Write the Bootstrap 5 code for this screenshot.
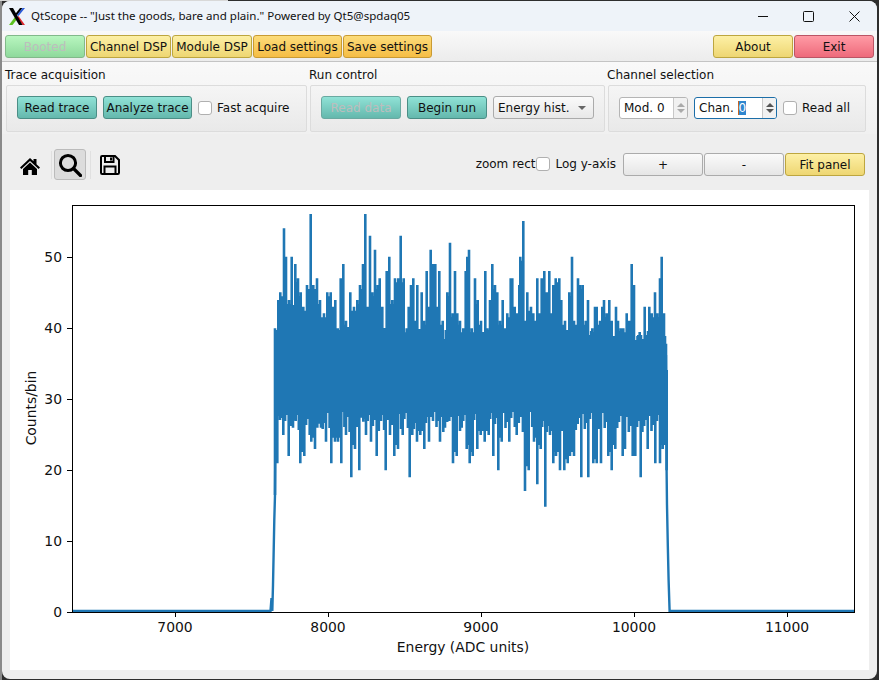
<!DOCTYPE html>
<html lang="en">
<head>
<meta charset="utf-8">
<title>QtScope</title>
<link rel="stylesheet" href="https://cdn.jsdelivr.net/npm/bootstrap@5.3.0/dist/css/bootstrap.min.css">
<style>
html, body { height: 680px; overflow: hidden; }
body { background: linear-gradient(#d8d8d8, #d8d8d8) 0 0 / 228px 1px no-repeat, linear-gradient(90deg, #8a8a8a 2px, #2e2e2e 2px); font-family: "DejaVu Sans", sans-serif; font-size: 12px; color: #111; }
.qt-window { margin: 1px 2px 1px 2px; height: 678px; background: #eee; border-radius: 8px; overflow: hidden; }
.qt-title { height: 30px; background: #eef3f9; padding-left: 7px; font-family: "Noto Sans", sans-serif; font-size: 11.55px; }
.qt-title .logo { width: 16px; height: 17px; margin-right: 6px; }
.win-ctl { width: 45.5px; height: 30px; }
.qt-top { height: 31px; padding: 4px 3px 3px 3px; gap: 1px; background: linear-gradient(#f9f9f9, #ececec); border-bottom: 1px solid #c4c4c4; }
.qt-btn { font-size: 12px; line-height: 21px; height: 23px; padding: 1px 0 0 0; border-radius: 3px; color: #111; white-space: nowrap; --bs-btn-font-size: 12px; }
.qt-btn:disabled { opacity: 1; color: #bdbdbd; }
.w80 { width: 80px; }
.w85 { width: 85px; }
.w89 { width: 89px; }
.c-green { background: linear-gradient(#b8f6bf, #8fd99c); border: 1px solid #82b98a; }
.c-green:disabled { background: linear-gradient(#b8f6bf, #8fd99c); border-color: #82b98a; }
.c-yellow { background: linear-gradient(#fdf0a6, #eed672); border: 1px solid #bda63f; }
.c-orange { background: linear-gradient(#fddc7a, #f5bd45); border: 1px solid #c99b33; }
.c-red { background: linear-gradient(#ff9ba5, #ee6a7b); border: 1px solid #bb5565; }
.c-teal { background: linear-gradient(#90e2d6, #64b8ad); border: 1px solid #4b8e86; }
.c-teal:disabled { background: linear-gradient(#90e2d6, #64b8ad); border-color: #6aa9a1; }
.c-grey { background: linear-gradient(#fafafa, #e6e6e6); border: 1px solid #ababab; }
.qt-btn:hover, .qt-btn:active { color: #111; }
.qt-controls { height: 72px; padding-left: 4px; gap: 3px; background: linear-gradient(#f9f9f9, #f0f0f0); }
.grp-head { height: 23px; line-height: 27px; margin-left: -1px; white-space: nowrap; }
.grp-box { height: 47px; padding: 10px 0 0 10px; gap: 6px; background: linear-gradient(#f5f5f5, #e9e9e9); border: 1px solid #dcdcdc; border-radius: 2px; }
.w301 { width: 301px; }
.w295 { width: 295px; }
.w258 { width: 258px; }
.qt-check { width: 14px; height: 14px; margin: 0; border: 1px solid #b0b0b0; border-radius: 2px; flex: none; background-color: #fff; }
.qt-label { margin: 0 0 0 5px; white-space: nowrap; }
.qt-combo { width: 101px; height: 23px; padding: 0 0 0 4px; color: #111; background: linear-gradient(#fafafa, #e8e8e8); border: 1px solid #ababab; border-radius: 3px; }
.qt-caret { width: 0; height: 0; border-left: 4px solid transparent; border-right: 4px solid transparent; border-top: 4px solid #666; margin-right: 7px; }
.qt-spin { height: 22px; background: #fff; border: 1px solid #b5b5b5; border-radius: 3px; overflow: hidden; line-height: 20px; margin-top: 1px; }
.qt-spin.focused { border-color: #1c6ea8; }
.w69 { width: 69px; }
.w83 { width: 83px; }
.spin-text { padding-left: 4px; white-space: nowrap; }
.spin-arrows { width: 14px; border-left: 1px solid #c8c8c8; background: #f1f1f1; gap: 2px; }
.tri-up, .tri-dn { width: 0; height: 0; border-left: 4px solid transparent; border-right: 4px solid transparent; }
.tri-up { border-bottom: 4px solid #aaa; }
.tri-dn { border-top: 4px solid #aaa; }
.focused .tri-up { border-bottom-color: #555; }
.focused .tri-dn { border-top-color: #555; }
.sel-text { background: #2f86cf; color: #fff; border-left: 1px solid #c8641e; }
.qt-mpl { height: 56px; background: #eee; padding: 5px 12px 0 0; }
.tool-home { width: 20px; margin-left: 18px; margin-top: 3px; }
.tool-sep { width: 1px; height: 28px; background: #e0e0e0; }
.tool-sep-home { margin-left: 11px; }
.tool-zoom { width: 32px; height: 31px; background: #dcdcdc; border: 1px solid #bbb; border-radius: 3px; margin: 0 4px 0 2px; }
.tool-save { margin-left: 9px; }
.mpl-right { margin-left: auto; }
.mpl-opts { margin-top: -2px; }
.check-tight { margin-left: 1px; }
.mpl-btns { gap: 1px; margin-left: 7px; }
.plot-wrap { height: 480px; margin: 0 8px 0 8px; background: #fff; }
.plot-wrap svg { display: block; }
.plot-wrap text { font-family: "DejaVu Sans", sans-serif; font-size: 13.9px; fill: #111; }
</style>
</head>
<body>
<div class="qt-window">

  <div class="qt-title d-flex align-items-center">
    <svg class="logo" viewBox="0 0 16 16" preserveAspectRatio="none">
      <polygon points="0,16 3.5,16 8,10.5 6,8.5" fill="#5cc21f"/>
      <polygon points="11,0 13.5,0 8,7 6.5,5.5" fill="#000"/>
      <polygon points="13.5,0 16,0 9.5,7.5 8,6.5" fill="#2b5bd8"/>
      <polygon points="9.5,7.5 16,16 13.5,16 8,9" fill="#e0242c"/>
      <polygon points="0,0 4,0 13.5,16 10,16" fill="#000"/>
    </svg>
    <span>QtScope -- "Just the goods, bare and plain." Powered by Qt5@spdaq05</span>
    <div class="d-flex ms-auto">
      <div class="win-ctl d-flex align-items-center justify-content-center"><svg width="10" height="10"><path d="M0 5.5H10" stroke="#111"/></svg></div>
      <div class="win-ctl d-flex align-items-center justify-content-center"><svg width="11" height="11"><rect x=".5" y=".5" width="10" height="10" rx="1" fill="none" stroke="#111"/></svg></div>
      <div class="win-ctl d-flex align-items-center justify-content-center"><svg width="11" height="11"><path d="M.5 .5L10.5 10.5M10.5 .5L.5 10.5" stroke="#111"/></svg></div>
    </div>
  </div>

  <div class="qt-top d-flex">
    <button class="btn qt-btn w80 c-green" disabled>Booted</button>
    <button class="btn qt-btn w85 c-yellow">Channel DSP</button>
    <button class="btn qt-btn w80 c-yellow">Module DSP</button>
    <button class="btn qt-btn w89 c-orange">Load settings</button>
    <button class="btn qt-btn w89 c-orange">Save settings</button>
    <button class="btn qt-btn w80 c-yellow ms-auto">About</button>
    <button class="btn qt-btn w80 c-red">Exit</button>
  </div>

  <div class="qt-controls d-flex">
    <div>
      <div class="grp-head">Trace acquisition</div>
      <div class="grp-box w301 d-flex align-items-start">
        <button class="btn qt-btn w80 c-teal">Read trace</button>
        <button class="btn qt-btn w89 c-teal">Analyze trace</button>
        <div class="d-flex align-items-center" style="height:23px">
          <input class="form-check-input qt-check" type="checkbox">
          <label class="qt-label">Fast acquire</label>
        </div>
      </div>
    </div>
    <div>
      <div class="grp-head">Run control</div>
      <div class="grp-box w295 d-flex align-items-start">
        <button class="btn qt-btn w80 c-teal" disabled>Read data</button>
        <button class="btn qt-btn w80 c-teal">Begin run</button>
        <div class="qt-combo d-flex align-items-center justify-content-between"><span>Energy hist.</span><span class="qt-caret"></span></div>
      </div>
    </div>
    <div>
      <div class="grp-head">Channel selection</div>
      <div class="grp-box w258 d-flex align-items-start">
        <div class="qt-spin w69 d-flex justify-content-between">
          <span class="spin-text">Mod. 0</span>
          <span class="spin-arrows d-flex flex-column align-items-center justify-content-center"><span class="tri-up"></span><span class="tri-dn"></span></span>
        </div>
        <div class="qt-spin focused w83 d-flex justify-content-between">
          <span class="spin-text">Chan. <span class="sel-text">0</span></span>
          <span class="spin-arrows d-flex flex-column align-items-center justify-content-center"><span class="tri-up"></span><span class="tri-dn"></span></span>
        </div>
        <div class="d-flex align-items-center" style="height:23px">
          <input class="form-check-input qt-check" type="checkbox">
          <label class="qt-label">Read all</label>
        </div>
      </div>
    </div>
  </div>

  <div class="qt-mpl d-flex align-items-center">
    <svg class="tool-home" width="20" height="18" viewBox="0 0 20 18">
      <path d="M0 10.5L10 1 13.5 4.3V2H16.5V7.2L20 10.5 18.6 12 10 4 1.4 12Z" fill="#000"/>
      <path d="M3 12L10 5.5 17 12V18H11.8V13H8.2V18H3Z" fill="#000"/>
    </svg>
    <span class="tool-sep tool-sep-home"></span>
    <span class="tool-zoom d-flex align-items-center justify-content-center">
      <svg width="24" height="24" viewBox="0 0 24 24"><circle cx="10" cy="10" r="7.6" fill="none" stroke="#000" stroke-width="3"/><path d="M15.5 15.5L22.5 22.5" stroke="#000" stroke-width="3.2" stroke-linecap="round"/></svg>
    </span>
    <span class="tool-sep"></span>
    <svg class="tool-save" width="20" height="20" viewBox="0 0 20 20">
      <path d="M1 2.2Q1 1 2.2 1H15L19 5V17.8Q19 19 17.8 19H2.2Q1 19 1 17.8Z" fill="none" stroke="#000" stroke-width="2"/>
      <path d="M5 1.5V7H13.5V1.5M4.5 18.5V11.5H15.5V18.5" fill="none" stroke="#000" stroke-width="2"/>
      <rect x="10" y="2.5" width="2" height="3"/>
    </svg>
    <div class="mpl-right d-flex align-items-center">
      <div class="mpl-opts d-flex align-items-center">
        <span>zoom rect</span>
        <input class="form-check-input qt-check check-tight" type="checkbox">
        <label class="qt-label">Log y-axis</label>
      </div>
      <div class="mpl-btns d-flex">
        <button class="btn qt-btn w80 c-grey">+</button>
        <button class="btn qt-btn w80 c-grey">-</button>
        <button class="btn qt-btn w80 c-yellow">Fit panel</button>
      </div>
    </div>
  </div>

  <div class="plot-wrap">
    <svg id="plot" width="859" height="480" viewBox="10 190 859 480">
      <path id="trace" fill="none" stroke="#1f77b4" stroke-width="2.6"/>
      <path id="edges" fill="none" stroke="#1f77b4" stroke-width="2.4"/>
      <rect x="72.5" y="205.5" width="782" height="407" fill="none" stroke="#000"/>
      <path d="M175.5 612v5M328.5 612v5M481.5 612v5M634.5 612v5M787.5 612v5M72 612.5h-5M72 541.5h-5M72 470.5h-5M72 399.5h-5M72 328.5h-5M72 257.5h-5" stroke="#000"/>
      <g text-anchor="middle">
        <text x="175" y="632">7000</text>
        <text x="328" y="632">8000</text>
        <text x="481" y="632">9000</text>
        <text x="634" y="632">10000</text>
        <text x="787" y="632">11000</text>
        <text x="463" y="652">Energy (ADC units)</text>
      </g>
      <g text-anchor="end">
        <text x="62" y="617">0</text>
        <text x="62" y="546">10</text>
        <text x="62" y="475">20</text>
        <text x="62" y="404">30</text>
        <text x="62" y="333">40</text>
        <text x="62" y="262">50</text>
      </g>
      <text x="36" y="408" text-anchor="middle" transform="rotate(-90 36 408)">Counts/bin</text>
    </svg>
  </div>
</div>

<script src="https://cdn.jsdelivr.net/npm/bootstrap@5.3.0/dist/js/bootstrap.bundle.min.js"></script>
<script>
// envelope of the histogram, read off the screenshot as [x, y] in 3x crop coords
const upA = [[30,370],[40,285],[46,262],[57,70],[63,155],[72,285],[80,155],[85,300],[91,177],[99,220],[107,262],[115,305],[126,240],[137,27],[145,240],[156,220],[165,285],[177,325],[187,262],[197,262],[205,305],[211,285],[218,370],[227,220],[235,177],[243,347],[256,262],[267,305],[277,285],[285,240],[294,177],[301,27],[308,305],[315,92],[322,262],[330,134],[338,240],[344,220],[352,305],[365,198],[373,155],[382,285],[390,220],[400,220],[407,92],[416,220],[425,370],[431,305],[438,240],[445,220],[451,347],[457,240],[470,262],[477,347],[485,198],[491,305],[497,134],[505,177],[511,177],[516,305],[523,198],[533,347],[547,262],[555,113],[563,325],[570,198],[577,325],[585,347],[595,370],[602,198],[607,155],[612,134],[620,370],[630,220]];
const loA = [[30,870],[37,775],[45,645],[55,690],[71,753],[84,668],[92,648],[106,775],[118,753],[134,690],[139,710],[150,732],[157,668],[168,668],[183,710],[199,775],[210,710],[219,710],[229,775],[243,690],[259,817],[270,732],[283,796],[295,650],[303,690],[318,710],[335,753],[348,648],[362,796],[375,690],[388,753],[399,732],[413,690],[434,817],[442,690],[456,710],[466,690],[478,732],[492,710],[504,648],[525,710],[540,668],[553,648],[564,775],[575,753],[590,668],[605,732],[614,775],[623,753]];
const upB = [[23,285],[33,347],[46,198],[52,370],[60,285],[67,177],[75,240],[82,262],[90,347],[98,285],[104,370],[112,325],[122,220],[127,220],[134,305],[141,325],[148,240],[151,155],[160,48],[165,347],[172,262],[183,305],[190,325],[195,347],[202,220],[208,325],[215,220],[223,198],[230,262],[238,198],[243,325],[250,240],[257,220],[268,220],[274,285],[285,347],[298,262],[306,155],[312,347],[324,220],[330,240],[338,240],[347,347],[354,285],[360,430],[367,370],[375,305],[380,305],[390,347],[397,305],[402,285],[410,325],[418,285],[425,347],[438,305],[444,347],[452,370],[460,370],[470,325],[478,347],[485,177],[492,240],[500,408],[505,390],[513,390],[524,305],[530,390],[538,305],[545,325],[555,262],[562,325],[570,220],[575,155],[582,325],[588,455]];
const loB = [[8,753],[22,732],[32,690],[44,710],[56,690],[70,753],[85,796],[95,710],[118,710],[140,690],[165,858],[176,796],[192,710],[202,838],[212,732],[226,905],[240,690],[250,775],[258,753],[270,796],[283,796],[293,775],[300,753],[312,753],[334,817],[355,817],[370,775],[380,775],[393,775],[415,753],[425,796],[436,732],[458,753],[465,732],[488,753],[496,753],[512,817],[533,732],[556,775],[570,775],[578,732],[590,796]];

const toPage = (list, ox) => list.map(p => [ox + p[0] / 3, 205 + p[1] / 3]);
const up = toPage(upA, 265).concat(toPage(upB, 470));
const lo = toPage(loA, 265).concat(toPage(loB, 470));
const coreMid = 370;
let d = "";

// one stroke per peak or dip, plus shorter ones between neighbours to close the gaps
function strokes(list, near, far) {
  list.forEach((p, i) => {
    d += `M${p[0].toFixed(1)} ${p[1].toFixed(1)}V${coreMid}`;
    const next = list[i + 1];
    if (!next) return;
    const gap = next[0] - p[0];
    if (gap <= 4) {
      d += `M${(p[0] + gap / 2).toFixed(1)} ${near(p[1], next[1], i).toFixed(1)}V${coreMid}`;
    } else {
      const n = Math.ceil(gap / 2.2) - 1;
      for (let k = 1; k <= n; k++) {
        d += `M${(p[0] + gap * k / (n + 1)).toFixed(1)} ${far(i + k * 3).toFixed(1)}V${coreMid}`;
      }
    }
  });
}
strokes(up, (a, b, i) => Math.min(Math.max(a, b) + 4, 330 + (i * 7) % 11), i => 326 + (i * 7) % 15);
strokes(lo, (a, b, i) => Math.max(Math.min(a, b) - 4, 408 + (i * 5) % 13), i => 412 + (i * 5) % 21);
const trace = document.getElementById("trace");
trace.setAttribute("d", d + "M276 345H666V405H276Z");
trace.setAttribute("fill", "#1f77b4");

// baseline and the two edges of the spectrum
document.getElementById("edges").setAttribute("d",
  "M72 611H270.5L271.5 598 272.3 611 273 585 273.6 555 274.3 520 275 495 275.6 420" +
  "M666 355L666.6 470 667 505 667.8 545 668.6 580 669.6 611 670.5 611H855");
</script>
</body>
</html>
